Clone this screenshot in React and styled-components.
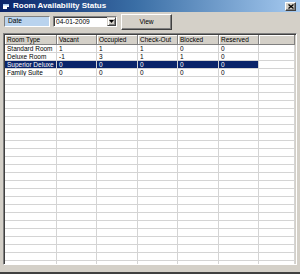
import React from "react";
import styled, { createGlobalStyle } from "styled-components";

const GlobalStyle = createGlobalStyle`
  html, body {
    margin: 0;
    padding: 0;
    background: #d4d0c8;
  }
  * { box-sizing: border-box; }
`;

const Window = styled.div`
  width: 300px;
  height: 274px;
  background: #d4d0c8;
  border-bottom: 2px solid #404040;
  display: flex;
  flex-direction: column;
  font-family: "Liberation Sans", Arial, sans-serif;
  overflow: hidden;
`;

const TitleBar = styled.div`
  height: 12px;
  flex: none;
  display: flex;
  align-items: center;
  padding: 0 4px 0 3px;
  gap: 3px;
  background: linear-gradient(to right, #0a246a 0%, #3a6ea5 45%, #a6caf0 100%);
`;

const TitleText = styled.span`
  flex: 1;
  color: #fff;
  font-weight: bold;
  font-size: 8px;
  line-height: 12px;
  white-space: nowrap;
`;

const CloseButton = styled.div`
  width: 11px;
  height: 9px;
  background: #d4d0c8;
  border: 1px solid;
  border-color: #fff #404040 #404040 #fff;
  box-shadow: inset -1px -1px #808080;
  display: flex;
  align-items: center;
  justify-content: center;
`;

const Toolbar = styled.div`
  height: 17px;
  margin-top: 1px;
  flex: none;
  display: flex;
  align-items: center;
  padding: 0 4px;
`;

const LabelBox = styled.div`
  width: 46px;
  height: 11px;
  background: #b9d3ee;
  border: 1px solid;
  border-color: #808080 #fff #fff #808080;
  font-size: 6.6px;
  line-height: 7px;
  padding-left: 3px;
  color: #000;
`;

const Combo = styled.div`
  margin-left: 3px;
  width: 64px;
  height: 11px;
  background: #fff;
  border: 1px solid;
  border-color: #808080 #fff #fff #808080;
  box-shadow: inset 1px 1px #404040;
  display: flex;
  align-items: stretch;
`;

const ComboText = styled.span`
  flex: 1;
  font-size: 6.6px;
  line-height: 9px;
  padding-left: 2px;
  color: #000;
`;

const DropButton = styled.div`
  width: 9px;
  background: #d4d0c8;
  border: 1px solid;
  border-color: #d4d0c8 #404040 #404040 #d4d0c8;
  box-shadow: inset 1px 1px #fff, inset -1px -1px #808080;
  display: flex;
  align-items: center;
  justify-content: center;
`;

const Button = styled.div`
  margin-left: 4px;
  width: 51px;
  height: 16px;
  background: #d4d0c8;
  border: 1px solid;
  border-color: #fff #404040 #404040 #fff;
  box-shadow: inset -1px -1px #808080;
  font-size: 6.6px;
  color: #000;
  display: flex;
  align-items: center;
  justify-content: center;
`;

const Grid = styled.div`
  flex: 1;
  margin: 3px 3px 7px;
  background: #fff;
  border: 1px solid;
  border-color: #808080 #fff #fff #808080;
  box-shadow: inset 1px 1px #404040, inset -1px -1px #d4d0c8;
  padding: 1px;
  overflow: hidden;
`;

const Row = styled.div`
  display: grid;
  grid-template-columns: 52px 40px 41px 40px 41px 40px 1fr;
  height: ${(p) => (p.$header ? 10 : 8)}px;
`;

const HeadCell = styled.div`
  background: #d4d0c8;
  border-right: 1px solid #808080;
  border-bottom: 1px solid #808080;
  box-shadow: inset 1px 1px #fff;
  font-size: 6.5px;
  line-height: 9px;
  padding-left: 2px;
  color: #000;
  white-space: nowrap;
  overflow: hidden;
`;

const Cell = styled.div`
  border-right: 1px solid #d4d4d4;
  border-bottom: 1px solid #d4d4d4;
  background: ${(p) => (p.$selected ? "#0a246a" : "#fff")};
  color: ${(p) => (p.$selected ? "#fff" : "#000")};
  font-size: 6.5px;
  line-height: 7px;
  padding-left: 2px;
  white-space: nowrap;
  overflow: hidden;
`;

const columns = ["Room Type", "Vacant", "Occupied", "Check-Out", "Blocked", "Reserved", ""];

const rooms = [
  ["Standard Room", "1", "1", "1", "0", "0"],
  ["Deluxe Room", "-1", "3", "1", "1", "0"],
  ["Superior Deluxe", "0", "0", "0", "0", "0"],
  ["Family Suite", "0", "0", "0", "0", "0"],
];

const selectedRow = 2;

const WindowIcon = () => (
  <svg width="7" height="7" viewBox="0 0 7 7">
    <rect x="0" y="1" width="6" height="5" fill="#fff" />
    <rect x="0" y="1" width="6" height="1.5" fill="#a6caf0" />
    <rect x="4" y="4" width="3" height="3" fill="#0a246a" />
  </svg>
);

const CloseIcon = () => (
  <svg width="6" height="5" viewBox="0 0 6 5">
    <path d="M0.5 0.5 L5.5 4.5 M5.5 0.5 L0.5 4.5" stroke="#000" strokeWidth="1.3" />
  </svg>
);

const DownArrow = () => (
  <svg width="5" height="3" viewBox="0 0 5 3">
    <polygon points="0,0 5,0 2.5,3" fill="#000" />
  </svg>
);

export default function App() {
  const emptyRows = Array.from({ length: 26 });
  return (
    <>
      <GlobalStyle />
      <Window>
        <TitleBar>
          <WindowIcon />
          <TitleText>Room Availability Status</TitleText>
          <CloseButton>
            <CloseIcon />
          </CloseButton>
        </TitleBar>
        <Toolbar>
          <LabelBox>Date</LabelBox>
          <Combo>
            <ComboText>04-01-2009</ComboText>
            <DropButton>
              <DownArrow />
            </DropButton>
          </Combo>
          <Button>View</Button>
        </Toolbar>
        <Grid>
          <Row $header>
            {columns.map((c, i) => (
              <HeadCell key={i}>{c}</HeadCell>
            ))}
          </Row>
          {rooms.map((r, ri) => (
            <Row key={ri}>
              {r.map((v, ci) => (
                <Cell key={ci} $selected={ri === selectedRow}>
                  {v}
                </Cell>
              ))}
              <Cell />
            </Row>
          ))}
          {emptyRows.map((_, ri) => (
            <Row key={"e" + ri}>
              {columns.map((_, ci) => (
                <Cell key={ci} />
              ))}
            </Row>
          ))}
        </Grid>
      </Window>
    </>
  );
}
